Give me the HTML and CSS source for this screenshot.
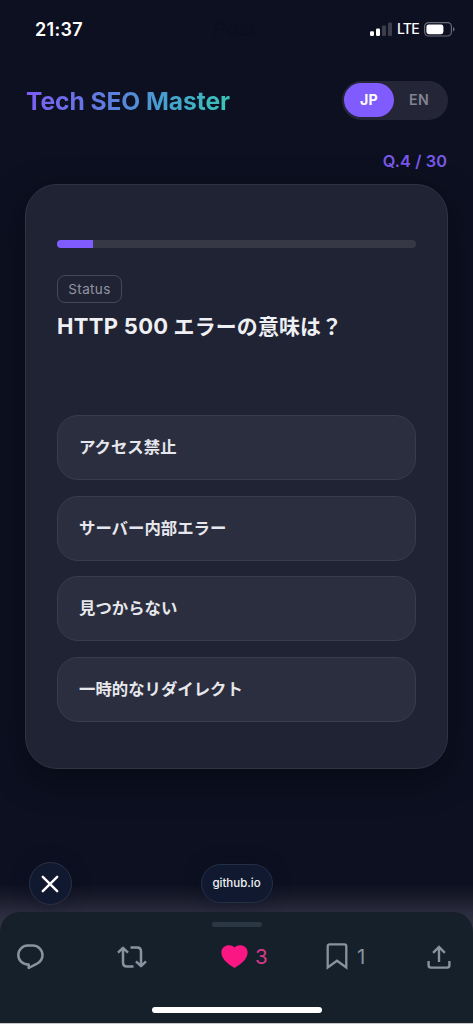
FILE: index.html
```html
<!DOCTYPE html>
<html lang="ja">
<head>
<meta charset="utf-8">
<title>Tech SEO Master</title>
<link rel="stylesheet" href="styles.css">
</head>
<body>
<div class="screen">
  <div class="statusbar">
    <span class="time">21:37</span>
    <span class="ghost">Post</span>
    <div class="signals">
      <svg width="22" height="14" viewBox="0 0 22 14"><rect x="0" y="9.200" width="4" height="4.800" rx="1.2" fill="#fff"/><rect x="6" y="6.500" width="4" height="7.500" rx="1.2" fill="#fff"/><rect x="12" y="3.5" width="4" height="10.5" rx="1.2" fill="#3c3e4b"/><rect x="18" y="0.5" width="4" height="13.5" rx="1.2" fill="#3c3e4b"/></svg>
      <span class="lte">LTE</span>
      <svg width="31" height="15" viewBox="0 0 31 15"><rect x=".6" y=".6" width="26.8" height="13.4" rx="4" fill="none" stroke="#686a74" stroke-width="1.2"/><rect x="2.4" y="2.4" width="17" height="9.8" rx="2.4" fill="#fff"/><path d="M29 5v4.6q1.500-.6 1.500-2.300T29 5" fill="#686a74"/></svg>
    </div>
  </div>
  <header class="header">
    <h1 class="title">Tech SEO Master</h1>
    <div class="toggle"><span class="lang active">JP</span><span class="lang">EN</span></div>
  </header>
  <div class="counter">Q.4 / 30</div>
  <main class="card">
    <div class="progress"><div class="bar"></div></div>
    <span class="tag">Status</span>
    <h2 class="question"><span class="code">HTTP 500</span> エラーの意味は？</h2>
    <div class="options">
      <div class="option">アクセス禁止</div>
      <div class="option">サーバー内部エラー</div>
      <div class="option">見つからない</div>
      <div class="option">一時的なリダイレクト</div>
    </div>
  </main>
  <div class="browser">
    <div class="close"><svg width="18" height="18" viewBox="0 0 18 18"><path d="M1.800 1.800l14.400 14.400M16.200 1.800L1.800 16.200" stroke="#fff" stroke-width="2.400" stroke-linecap="round"/></svg></div>
    <div class="domain">github.io</div>
  </div>
  <footer class="sheet">
    <div class="grabber"></div>
    <div class="actions">
      <svg width="27" height="26" viewBox="0 0 27 26" fill="none" stroke="#8794a0" stroke-width="2.500" stroke-linejoin="round"><path d="M10.800 1.500h5a9.700 9.700 0 0 1 9.700 9.700c0 4-2.300 6.600-5.500 8.500L11.700 24v-3.500h-.9a9.500 9.500 0 0 1 0-19z"/></svg>
      <svg width="30" height="22" viewBox="0 0 30 22" fill="none" stroke="#8794a0" stroke-width="2.500"><path d="M1 6.600l5-4.800 5 4.800M6 2v14.500q0 4 4 4h6.500M13.500 1.500H20q4 0 4 4V20M19 15.400l5 4.800 5-4.800" stroke-linejoin="round"/></svg>
      <div class="like"><svg width="27" height="23" viewBox="0 0 27 23"><path d="M13.500 2.600C11.700.6 9.300 0 7.200.2 3.200.5.4 3.600.4 7.500c0 6.800 7.100 12 13.100 15.400 6-3.400 13.100-8.600 13.100-15.400 0-3.900-2.800-7-6.800-7.300-2.100-.2-4.500.4-6.300 2.400z" fill="#fa1783"/></svg><span>3</span></div>
      <div class="save"><svg width="22" height="27" viewBox="0 0 22 27" fill="none" stroke="#8794a0" stroke-width="2.300"><path d="M1.700 3.400q0-2 2-2h14.600q2 0 2 2v21l-9.300-6.700-9.300 6.700z"/></svg><span>1</span></div>
      <svg width="24" height="24" viewBox="0 0 24 24" fill="none" stroke="#8794a0" stroke-width="2.400"><path d="M12 17V2M6.100 7.800L12 1.900l5.900 5.900M1.600 16v4.300q0 2.300 2.300 2.300h16.200q2.300 0 2.300-2.300V16"/></svg>
    </div>
    <div class="home"></div>
  </footer>
</div>
</body>
</html>
```
FILE: styles.css
```css
* { box-sizing: border-box; }
body { margin: 0; background: #0d1020; font-family: Inter, "Noto Sans CJK JP", sans-serif; }
.screen { width: 473px; height: 1024px; overflow: hidden; display: flex; flex-direction: column; background: linear-gradient(#0d1020 0, #0d1020 884px, #181a2a 896px, #292a3b 912px, #383948 935px); border-bottom: 1px solid #c5c9ce; }
.statusbar { height: 80px; padding: 19px 18px 0 35px; display: grid; grid-template-columns: 178px 1fr auto; align-items: start; color: #fff; }
.time { font-size: 18px; line-height: 21px; font-weight: 600; letter-spacing: .3px; }
.ghost { font-size: 20px; line-height: 20px; font-weight: 700; color: #0c0e1d; }
.signals { display: flex; align-items: center; gap: 5px; height: 20px; }
.lte { font-size: 14px; line-height: 20px; font-weight: 500; letter-spacing: -.7px; }
.header { height: 40px; padding: 0 25px 0 26px; display: flex; align-items: center; justify-content: space-between; }
.title { margin: 1px 0 0; font-size: 24.600px; line-height: 34px; font-weight: 700; letter-spacing: -.07px; color: transparent; background: linear-gradient(100deg, #7d5cf5, #5c80dc 42%, #489bd2 64%, #36c8b8); background-clip: text; -webkit-background-clip: text; }
.toggle { width: 106px; height: 39px; padding: 2px 4px 3px 2px; display: flex; border-radius: 20px; background: #242637; }
.lang { flex: 1; display: flex; align-items: center; justify-content: center; border-radius: 18px; color: #818391; font-size: 14.200px; font-weight: 600; letter-spacing: .3px; }
.active { background: #805cff; color: #fff; font-weight: 700; }
.counter { height: 64px; padding: 30px 26px 0; text-align: right; color: #7959e8; font-size: 16.300px; line-height: 22px; font-weight: 600; letter-spacing: .1px; }
.card { width: 423px; height: 585px; margin-left: 25px; padding: 55px 31px 0; border: 1px solid #303342; border-radius: 32px; background: #202333; box-shadow: 0 10px 32px rgba(0, 5, 12, .5); display: flex; flex-direction: column; align-items: flex-start; flex-shrink: 0; }
.progress { width: 359px; height: 8px; border-radius: 4px; background: #363846; overflow: hidden; }
.bar { width: 36px; height: 8px; background: #805cff; }
.tag { width: 65px; height: 28px; margin-top: 27px; border: 1px solid #454857; border-radius: 8px; color: #9294a2; font-size: 13.500px; line-height: 26px; text-align: center; letter-spacing: .35px; }
.question { margin: 7px 0 0; height: 33px; font-size: 20.900px; line-height: 32px; font-weight: 700; letter-spacing: .2px; color: #eff0f3; white-space: nowrap; }
.code { font-size: 22px; letter-spacing: .3px; }
.options { width: 359px; margin-top: 72px; display: grid; gap: 15.700px; }
.option { height: 65px; padding: 0 0 3px 21px; border: 1px solid #393c4b; border-radius: 21px; background: #2b2e3e; display: flex; align-items: center; font-size: 16.400px; font-weight: 600; color: #e6e7ec; }
.browser { height: 143px; padding: 93px 29px 0; display: grid; grid-template-columns: 172px 72px; align-items: start; flex-shrink: 0; }
.close { width: 43px; height: 43px; padding-right: 1px; border: 1px solid #2b3246; border-radius: 50%; background: #10192f; display: flex; align-items: center; justify-content: center; box-shadow: 0 0 18px rgba(8, 12, 28, .35); }
.domain { height: 39px; margin-top: 2px; padding-right: 1px; border: 1px solid #243047; border-radius: 20px; background: #10192f; color: #f0f2f6; font-size: 11.500px; line-height: 37px; font-weight: 500; text-align: center; box-shadow: 0 0 18px rgba(8, 12, 28, .35); }
.sheet { height: 111px; flex-shrink: 0; border-radius: 20px 20px 0 0; background: #16202b; display: flex; flex-direction: column; align-items: center; }
.grabber { width: 50px; height: 5px; margin-top: 10px; border-radius: 3px; background: #2b3743; }
.actions { width: 473px; height: 59px; padding-left: 17px; display: grid; grid-template-columns: 100px 104px 105px 101px 1fr; align-items: center; }
.like, .save { display: flex; align-items: center; font-size: 20.500px; line-height: 26px; }
.like { gap: 7px; color: #d83b88; }
.save { gap: 9px; color: #8794a0; }
.home { width: 170px; height: 6px; margin-top: 21px; border-radius: 3px; background: #fff; }
```
